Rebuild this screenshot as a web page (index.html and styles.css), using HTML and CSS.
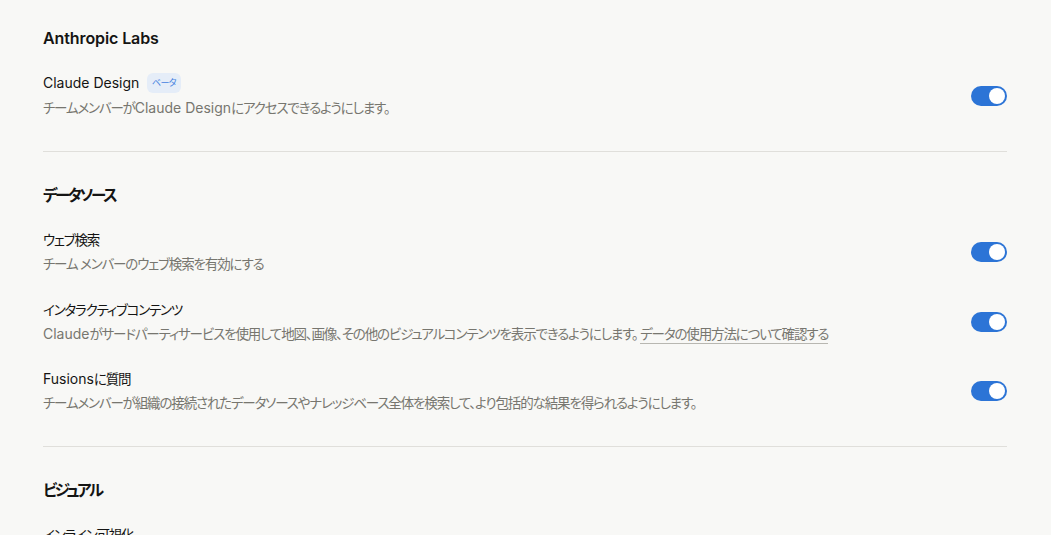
FILE: index.html
```html
<!DOCTYPE html>
<html lang="ja">
<head>
<meta charset="utf-8">
<link rel="stylesheet" href="styles.css">
</head>
<body>
<main class="page">
  <section class="section first">
    <h2 class="heading en">Anthropic Labs</h2>
    <div class="rows">
      <div class="row">
        <div class="text">
          <div class="title"><span class="en">Claude Design</span> <span class="badge">ベータ</span></div>
          <div class="desc">チームメンバーが<span class="en">Claude Design</span>にアクセスできるようにします。</div>
        </div>
        <span class="toggle"><span class="knob"></span></span>
      </div>
    </div>
  </section>
  <section class="section">
    <h2 class="heading">データソース</h2>
    <div class="rows">
      <div class="row">
        <div class="text">
          <div class="title">ウェブ検索</div>
          <div class="desc">チーム メンバーのウェブ検索を有効にする</div>
        </div>
        <span class="toggle"><span class="knob"></span></span>
      </div>
      <div class="row">
        <div class="text">
          <div class="title">インタラクティブコンテンツ</div>
          <div class="desc"><span class="en">Claude</span>がサードパーティサービスを使用して地図、画像、その他のビジュアルコンテンツを表示できるようにします。 <a class="link" href="#">データの使用方法について確認する</a></div>
        </div>
        <span class="toggle"><span class="knob"></span></span>
      </div>
      <div class="row">
        <div class="text">
          <div class="title"><span class="en">Fusions</span>に質問</div>
          <div class="desc">チームメンバーが組織の接続されたデータソースやナレッジベース全体を検索して、より包括的な結果を得られるようにします。</div>
        </div>
        <span class="toggle"><span class="knob"></span></span>
      </div>
    </div>
  </section>
  <section class="section last">
    <h2 class="heading">ビジュアル</h2>
    <div class="rows">
      <div class="row">
        <div class="text">
          <div class="title">インライン可視化</div>
        </div>
      </div>
    </div>
  </section>
</main>
</body>
</html>
```

FILE: styles.css
```css
html, body {
  margin: 0;
  background: #f8f8f6;
  height: 535px;
  overflow: hidden;
}
body {
  font-family: Inter, "Noto Sans CJK JP", sans-serif;
  font-feature-settings: "palt";
  color: #141413;
}
.page {
  padding: 0 44px 0 43px;
}
.section {
  padding: 32px 0 33px;
  border-bottom: 1px solid #e0dfdb;
}
.section.first {
  padding-top: 26px;
}
.section.first .heading {
  margin-bottom: 23px;
}
.section.last {
  border-bottom: none;
}
.heading {
  margin: 0 0 22px;
  font-size: 15.5px;
  line-height: 24px;
  font-weight: 600;
  letter-spacing: -2.4px;
}
.heading.en {
  font-size: 16px;
  letter-spacing: -0.1px;
}
.rows {
  display: flex;
  flex-direction: column;
  gap: 25.5px;
}
.row {
  display: flex;
  align-items: center;
  justify-content: space-between;
  gap: 24px;
}
.text {
  white-space: nowrap;
}
.title {
  font-size: 13.5px;
  line-height: 20px;
  letter-spacing: -1.2px;
}
.desc {
  margin-top: 4px;
  font-size: 13.5px;
  line-height: 20px;
  letter-spacing: -1.15px;
  color: #77766f;
}
.en {
  font-size: 14px;
  letter-spacing: 0;
}
.link {
  color: #77766f;
  text-decoration: none;
  border-bottom: 1px solid #b8b7b1;
  padding-bottom: 1px;
}
.badge {
  display: inline-flex;
  align-items: center;
  vertical-align: middle;
  height: 20px;
  margin-left: 5px;
  padding: 0 5px;
  border-radius: 6px;
  background: #e5edf8;
  color: #4482e0;
  font-size: 9px;
  letter-spacing: -0.6px;
  position: relative;
  top: -1px;
}
.toggle {
  flex: none;
  width: 36px;
  height: 20px;
  border-radius: 10px;
  background: #2c74d6;
  display: flex;
  align-items: center;
  justify-content: flex-end;
  padding: 0 2px;
  box-sizing: border-box;
}
.knob {
  width: 16px;
  height: 16px;
  border-radius: 50%;
  background: #fff;
}
```
